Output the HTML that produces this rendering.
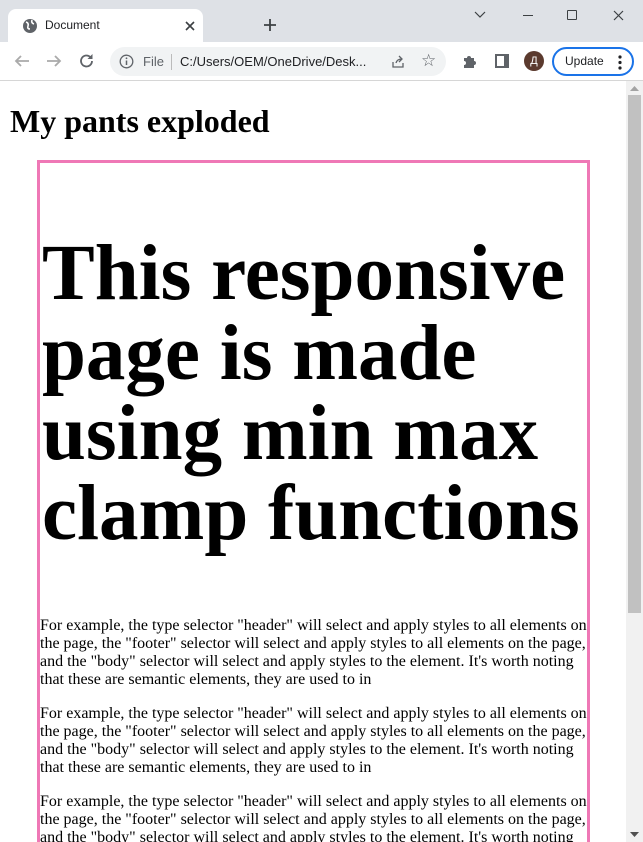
<!DOCTYPE html>
<html><head><meta charset="utf-8"><style>
*{box-sizing:border-box}
body{margin:0;width:643px;height:842px;overflow:hidden;background:#fff;position:relative;font-family:"Liberation Serif",serif}
.ui{font-family:"Liberation Sans",sans-serif}
.a{position:absolute}
#tabbar{left:0;top:0;width:643px;height:42px;background:#dee1e6}
#tab{left:8px;top:9px;width:195px;height:33px;background:#fff;border-radius:8px 8px 0 0}
#toolbar{left:0;top:42px;width:643px;height:39px;background:#fff;border-bottom:1px solid #d6d6d6}
#omni{left:110px;top:5px;width:336px;height:29px;background:#f1f3f4;border-radius:15px}
#content{left:0;top:81px;width:626px;height:761px;overflow:hidden}
#sb{left:626px;top:81px;width:17px;height:761px;background:#f1f1f1}
#thumb{left:2px;top:14px;width:13px;height:518px;background:#c1c1c1}
h1.t{font-size:32px;margin:0;left:10px;top:22px;font-weight:bold;line-height:37px}
#box{left:37px;top:79px;width:553px;border:3px solid #ef78b6;border-bottom:none;height:700px}
#box h1{font-size:79px;line-height:80px;margin:71px 0 63px 2px;font-weight:bold}
#box p{font-size:16px;line-height:18px;margin:0 0 16px 0}
</style></head><body>
<div id="tabbar" class="a ui">
 <div id="tab" class="a">
  <svg class="a" style="left:14px;top:9px" width="16" height="16" viewBox="0 0 16 16"><circle cx="8" cy="8" r="7" fill="#5f6368"/><path d="M4 4q3 1 2 4t2 3M10 2q-1 3 2 4" stroke="#fff" stroke-width="1.6" fill="none"/></svg>
  <span class="a" style="left:37px;top:9px;font-size:12px;color:#202124">Document</span>
  <svg class="a" style="left:176px;top:11px" width="12" height="12"><path d="M2 2l8 8M10 2l-8 8" stroke="#3c4043" stroke-width="1.6"/></svg>
 </div>
 <svg class="a" style="left:263px;top:18px" width="14" height="14"><path d="M7 1v12M1 7h12" stroke="#3c4043" stroke-width="1.8"/></svg>
 <svg class="a" style="left:473px;top:10px" width="14" height="10"><path d="M2 2l5 5 5-5" stroke="#3c4043" stroke-width="1.2" fill="none"/></svg>
 <div class="a" style="left:523px;top:15px;width:10px;height:1px;background:#3c4043"></div>
 <div class="a" style="left:567px;top:10px;width:10px;height:10px;border:1.2px solid #3c4043;border-radius:1px"></div>
 <svg class="a" style="left:613px;top:10px" width="11" height="11"><path d="M1 1l9 9M10 1l-9 9" stroke="#3c4043" stroke-width="1.2"/></svg>
</div>
<div id="toolbar" class="a ui">
 <svg class="a" style="left:13px;top:11px" width="18" height="16"><path d="M16 8H3M8 3L3 8l5 5" stroke="#aaa" stroke-width="1.8" fill="none"/></svg>
 <svg class="a" style="left:45px;top:11px" width="18" height="16"><path d="M2 8h13M10 3l5 5-5 5" stroke="#aaa" stroke-width="1.8" fill="none"/></svg>
 <svg class="a" style="left:78px;top:10px" width="18" height="18"><path d="M14 9a5.5 5.5 0 1 1-1.6-3.9" stroke="#5f6368" stroke-width="1.8" fill="none"/><path d="M14.5 2v5h-5z" fill="#5f6368"/></svg>
 <div id="omni" class="a">
  <svg class="a" style="left:9px;top:7px" width="15" height="15"><circle cx="7.5" cy="7.5" r="6.3" stroke="#5f6368" stroke-width="1.3" fill="none"/><path d="M7.5 6.5v4.5" stroke="#5f6368" stroke-width="1.5"/><circle cx="7.5" cy="4.3" r="0.9" fill="#5f6368"/></svg>
  <span class="a" style="left:33px;top:7px;font-size:13px;color:#5f6368">File</span>
  <div class="a" style="left:61px;top:7px;width:1px;height:16px;background:#bbb"></div>
  <span class="a" style="left:70px;top:7px;font-size:13px;color:#202124">C:/Users/OEM/OneDrive/Desk...</span>
  <svg class="a" style="left:280px;top:7px" width="16" height="16"><path d="M3 8v5h10V9M6 9q1-4 6-4M9 2l3 3-3 3" stroke="#5f6368" stroke-width="1.3" fill="none"/></svg>
  <span class="a" style="left:311px;top:4px;font-size:17px;color:#5f6368">☆</span>
 </div>
 <svg class="a" style="left:461px;top:11px" width="16" height="16"><path d="M3 5h3a2 2 0 1 1 4 0h3v3a2 2 0 1 1 0 4v3H3v-3a2 2 0 1 0 0-4z" fill="#5f6368"/></svg>
 <div class="a" style="left:495px;top:12px;width:14px;height:14px;border:2px solid #5f6368;border-right-width:5px"></div>
 <div class="a" style="left:524px;top:9px;width:20px;height:20px;border-radius:50%;background:#5b3a2e;color:#fff;font-size:11px;text-align:center;line-height:20px">Д</div>
 <div class="a" style="left:552px;top:5px;width:82px;height:29px;border:2px solid #1a73e8;border-radius:15px">
  <span class="a" style="left:11px;top:5px;font-size:12px;color:#202124">Update</span>
  <svg class="a" style="left:64px;top:6px" width="4" height="15"><circle cx="2" cy="2" r="1.6" fill="#202124"/><circle cx="2" cy="7.5" r="1.6" fill="#202124"/><circle cx="2" cy="13" r="1.6" fill="#202124"/></svg>
 </div>
</div>
<div id="content" class="a">
 <h1 class="t a">My pants exploded</h1>
 <div id="box" class="a">
  <h1>This responsive page is made using min max clamp functions</h1>
  <p>For example, the type selector "header" will select and apply styles to all elements on the page, the "footer" selector will select and apply styles to all elements on the page, and the "body" selector will select and apply styles to the element. It's worth noting that these are semantic elements, they are used to in</p>
  <p>For example, the type selector "header" will select and apply styles to all elements on the page, the "footer" selector will select and apply styles to all elements on the page, and the "body" selector will select and apply styles to the element. It's worth noting that these are semantic elements, they are used to in</p>
  <p>For example, the type selector "header" will select and apply styles to all elements on the page, the "footer" selector will select and apply styles to all elements on the page, and the "body" selector will select and apply styles to the element. It's worth noting that these are semantic elements, they are used to in</p>
 </div>
</div>
<div id="sb" class="a">
 <svg class="a" style="left:4px;top:4px" width="9" height="6"><path d="M0 6l4.5-5 4.5 5z" fill="#a3a3a3"/></svg>
 <div id="thumb" class="a"></div>
 <svg class="a" style="left:4px;top:751px" width="9" height="6"><path d="M0 0l4.5 5 4.5-5z" fill="#505050"/></svg>
</div>
</body></html>
